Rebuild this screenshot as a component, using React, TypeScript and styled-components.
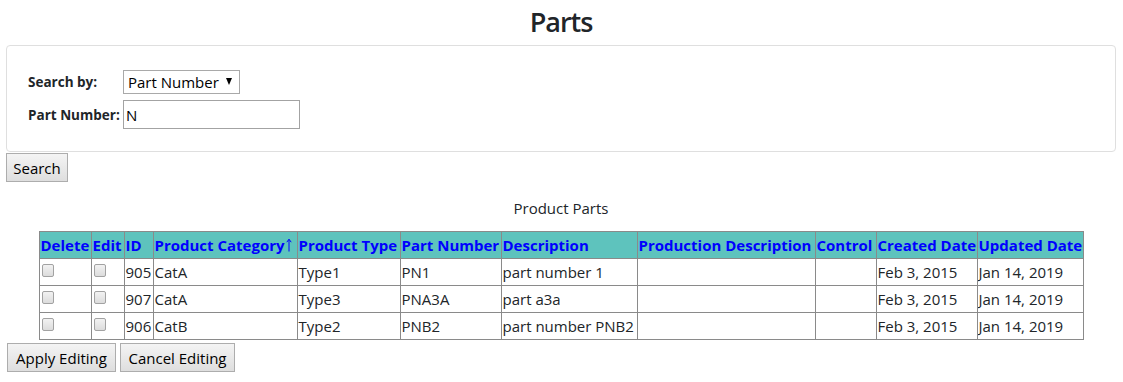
import React from "react";
import styled, { createGlobalStyle } from "styled-components";

const FONT = `"Open Sans", "Noto Sans", "Liberation Sans", sans-serif`;

const Global = createGlobalStyle`
  html, body { margin: 0; padding: 0; background: #fff; }
  body {
    font-family: ${FONT};
    font-size: 15px;
    line-height: 24px;
    color: #212529;
  }
  * { box-sizing: border-box; }
`;

const Page = styled.div`
  padding: 0 7px 0 6px;
`;

const Title = styled.h3`
  margin: 0 0 7px;
  padding-top: 5px;
  text-align: center;
  font-size: 27px;
  font-weight: 600;
  line-height: 33px;
  letter-spacing: -1px;
  color: #212529;
`;

const Panel = styled.div`
  border: 1px solid #dfdfdf;
  border-radius: 4px;
  padding: 24px 21px 22px;
`;

const FormGrid = styled.div`
  display: grid;
  grid-template-columns: 95px auto;
  grid-template-rows: 24px 29px;
  row-gap: 6px;
  justify-content: start;
`;

const Label = styled.label`
  align-self: center;
  font-size: 13.5px;
  font-weight: 700;
  line-height: 20px;
  color: #212529;
  white-space: nowrap;
`;

const SelectWrap = styled.span`
  position: relative;
  display: inline-block;
  width: 117px;
  height: 24px;
`;

const Select = styled.select`
  appearance: none;
  -webkit-appearance: none;
  width: 100%;
  height: 100%;
  border: 1px solid #a9a9a9;
  border-radius: 0;
  background: #fff;
  padding: 0 0 0 4px;
  font-family: ${FONT};
  font-size: 15px;
  color: #000;
  outline: none;
`;

const Caret = styled.span`
  position: absolute;
  right: 8px;
  top: 8px;
  width: 0;
  height: 0;
  border-left: 3.5px solid transparent;
  border-right: 3.5px solid transparent;
  border-top: 7px solid #000;
  pointer-events: none;
`;

const TextInput = styled.input`
  width: 177px;
  height: 29px;
  border: 1px solid #a3a3a3;
  border-radius: 0;
  padding: 0 2px;
  font-family: ${FONT};
  font-size: 15px;
  color: #000;
  outline: none;
`;

const Button = styled.button<{ $w: number }>`
  width: ${(p) => p.$w}px;
  height: 29px;
  padding: 0;
  border: 1px solid #adadad;
  border-radius: 0;
  background: linear-gradient(#f4f4f4, #dedede);
  font-family: ${FONT};
  font-size: 15px;
  line-height: 24px;
  color: #000;
  text-align: center;
  cursor: pointer;
`;

const SearchRow = styled.div`
  margin-top: 1px;
`;

const Caption = styled.div`
  margin-top: 14px;
  text-align: center;
  font-size: 15px;
  line-height: 24px;
  color: #212529;
`;

const Table = styled.table`
  margin: 11px auto 0;
  border-collapse: collapse;
  table-layout: fixed;
  width: 1044px;
`;

const Th = styled.th<{ $w: number }>`
  width: ${(p) => p.$w}px;
  background: #5ec3bd;
  border: 1px solid #8a8a8a;
  padding: 1px;
  text-align: left;
  font-weight: 700;
  color: #0000ff;
  white-space: nowrap;
  overflow: hidden;
  line-height: 24px;
`;

const Td = styled.td`
  border: 1px solid #8a8a8a;
  padding: 1px;
  vertical-align: top;
  white-space: nowrap;
  overflow: hidden;
  line-height: 24px;
  color: #212529;
`;

const SortArrow = styled.svg`
  display: inline-block;
  width: 6px;
  height: 14px;
  margin-left: 1px;
  vertical-align: -1px;
`;

const Check = styled.input`
  appearance: none;
  -webkit-appearance: none;
  display: block;
  width: 12px;
  height: 13px;
  margin: 4px 0 0 1px;
  border: 1px solid #a2a2a2;
  border-radius: 2px;
  background: linear-gradient(#f2f2f2, #dcdcdc);
`;

const Actions = styled.div`
  display: flex;
  gap: 4px;
  margin-top: 3px;
  padding-left: 1px;
`;

const columns: { label: string; w: number; sort?: boolean }[] = [
  { label: "Delete", w: 52 },
  { label: "Edit", w: 33 },
  { label: "ID", w: 29 },
  { label: "Product Category", w: 144, sort: true },
  { label: "Product Type", w: 103 },
  { label: "Part Number", w: 101 },
  { label: "Description", w: 136 },
  { label: "Production Description", w: 178 },
  { label: "Control", w: 61 },
  { label: "Created Date", w: 101 },
  { label: "Updated Date", w: 106 },
];

const rows = [
  { id: 905, cat: "CatA", type: "Type1", pn: "PN1", desc: "part number 1" },
  { id: 907, cat: "CatA", type: "Type3", pn: "PNA3A", desc: "part a3a" },
  { id: 906, cat: "CatB", type: "Type2", pn: "PNB2", desc: "part number PNB2" },
];

export default function App() {
  return (
    <Page>
      <Global />
      <Title>Parts</Title>
      <Panel>
        <FormGrid>
          <Label>Search by:</Label>
          <SelectWrap>
            <Select defaultValue="pn">
              <option value="pn">Part Number</option>
              <option value="desc">Description</option>
            </Select>
            <Caret />
          </SelectWrap>
          <Label>Part Number:</Label>
          <TextInput defaultValue="N" />
        </FormGrid>
      </Panel>
      <SearchRow>
        <Button $w={62}>Search</Button>
      </SearchRow>
      <Caption>Product Parts</Caption>
      <Table>
        <thead>
          <tr>
            {columns.map((c) => (
              <Th key={c.label} $w={c.w}>
                {c.label}
                {c.sort && (
                  <SortArrow viewBox="0 0 6 14" aria-hidden="true">
                    <path d="M3 13.5V1.5M0.8 4.2L3 1.2L5.2 4.2" fill="none" stroke="#0000ff" strokeWidth="1" />
                  </SortArrow>
                )}
              </Th>
            ))}
          </tr>
        </thead>
        <tbody>
          {rows.map((r) => (
            <tr key={r.id}>
              <Td><Check type="checkbox" /></Td>
              <Td><Check type="checkbox" /></Td>
              <Td>{r.id}</Td>
              <Td>{r.cat}</Td>
              <Td>{r.type}</Td>
              <Td>{r.pn}</Td>
              <Td>{r.desc}</Td>
              <Td></Td>
              <Td></Td>
              <Td>Feb 3, 2015</Td>
              <Td>Jan 14, 2019</Td>
            </tr>
          ))}
        </tbody>
      </Table>
      <Actions>
        <Button $w={109}>Apply Editing</Button>
        <Button $w={115}>Cancel Editing</Button>
      </Actions>
    </Page>
  );
}
